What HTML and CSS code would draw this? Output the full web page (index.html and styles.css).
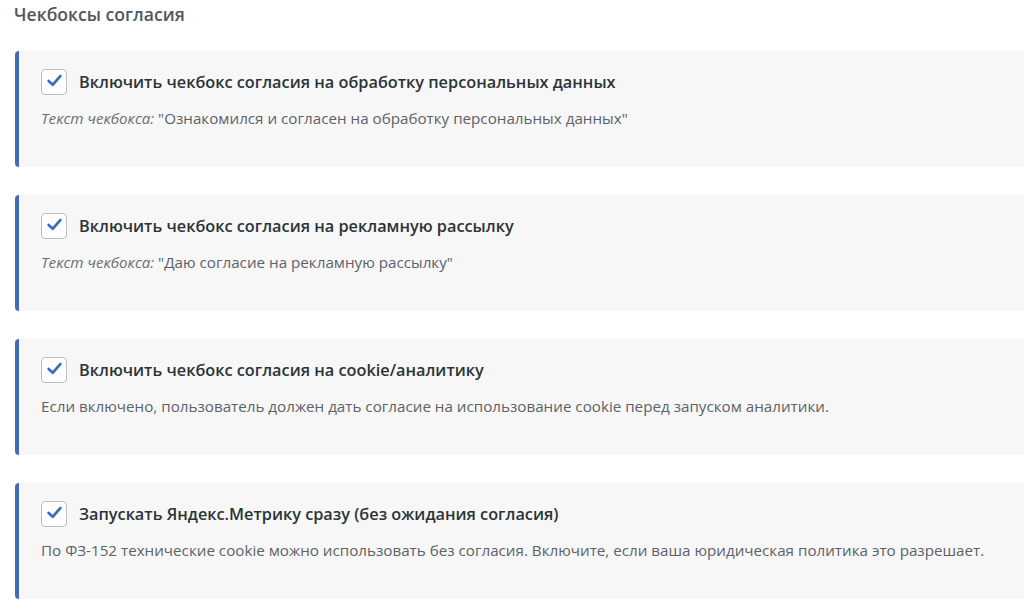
FILE: index.html
```html
<!DOCTYPE html>
<html lang="ru">
<head>
<meta charset="utf-8">
<link rel="stylesheet" href="styles.css">
</head>
<body>
<div class="page">
  <h2 class="title">Чекбоксы согласия</h2>
  <div class="cards">
    <div class="card">
      <label class="row">
        <span class="box"><svg viewBox="0 0 16 16" width="17" height="17"><path d="M2.5 8.5 L6.3 12 L13.5 3.8" fill="none" stroke="#3b6fb6" stroke-width="2.6" stroke-linecap="round" stroke-linejoin="round"/></svg></span>
        <span class="label">Включить чекбокс согласия на обработку персональных данных</span>
      </label>
      <p class="desc"><em>Текст чекбокса:</em> "Ознакомился и согласен на обработку персональных данных"</p>
    </div>
    <div class="card">
      <label class="row">
        <span class="box"><svg viewBox="0 0 16 16" width="17" height="17"><path d="M2.5 8.5 L6.3 12 L13.5 3.8" fill="none" stroke="#3b6fb6" stroke-width="2.6" stroke-linecap="round" stroke-linejoin="round"/></svg></span>
        <span class="label">Включить чекбокс согласия на рекламную рассылку</span>
      </label>
      <p class="desc"><em>Текст чекбокса:</em> "Даю согласие на рекламную рассылку"</p>
    </div>
    <div class="card">
      <label class="row">
        <span class="box"><svg viewBox="0 0 16 16" width="17" height="17"><path d="M2.5 8.5 L6.3 12 L13.5 3.8" fill="none" stroke="#3b6fb6" stroke-width="2.6" stroke-linecap="round" stroke-linejoin="round"/></svg></span>
        <span class="label">Включить чекбокс согласия на cookie/аналитику</span>
      </label>
      <p class="desc">Если включено, пользователь должен дать согласие на использование cookie перед запуском аналитики.</p>
    </div>
    <div class="card">
      <label class="row">
        <span class="box"><svg viewBox="0 0 16 16" width="17" height="17"><path d="M2.5 8.5 L6.3 12 L13.5 3.8" fill="none" stroke="#3b6fb6" stroke-width="2.6" stroke-linecap="round" stroke-linejoin="round"/></svg></span>
        <span class="label">Запускать Яндекс.Метрику сразу (без ожидания согласия)</span>
      </label>
      <p class="desc">По ФЗ-152 технические cookie можно использовать без согласия. Включите, если ваша юридическая политика это разрешает.</p>
    </div>
  </div>
</div>
</body>
</html>
```
FILE: styles.css
```css
html, body {
  margin: 0;
  padding: 0;
  background: #ffffff;
  overflow: hidden;
}
body {
  font-family: "Open Sans", "Noto Sans", sans-serif;
  color: #3c434a;
}
.page {
  padding: 0 0 0 15px;
  margin-right: -12px;
}
.title {
  margin: 0 0 0 -1px;
  font-size: 17.6px;
  font-weight: 600;
  color: #50575e;
  line-height: 28px;
}
.cards {
  display: flex;
  flex-direction: column;
  gap: 28px;
  margin-top: 23px;
}
.card {
  background: #f7f7f7;
  border-left: 4px solid #3f6db3;
  border-radius: 4px;
  height: 116px;
  box-sizing: border-box;
  padding: 18px 20px 0 22px;
}
.row {
  display: flex;
  align-items: center;
  gap: 12px;
}
.box {
  width: 24px;
  height: 24px;
  border: 1px solid #b9bcc0;
  border-radius: 4px;
  background: #fff;
  display: flex;
  align-items: center;
  justify-content: center;
  flex: none;
}
.box svg {
  display: block;
  margin-top: -3px;
}
.label {
  font-size: 16.3px;
  font-weight: 600;
  color: #2c3338;
}
.desc {
  margin: 12px 0 0 0;
  font-size: 15.2px;
  color: #5c6268;
  line-height: 22px;
}
.desc em {
  font-style: italic;
  color: #6b7075;
}
```
